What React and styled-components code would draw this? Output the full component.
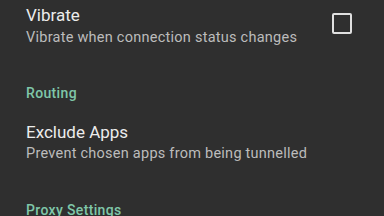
import React from "react";
import styled, { createGlobalStyle } from "styled-components";

const GlobalStyle = createGlobalStyle`
  html, body {
    margin: 0;
    padding: 0;
    background: #2f2f2f;
    overflow: hidden;
  }
`;

const Screen = styled.div`
  width: 384px;
  height: 216px;
  overflow: hidden;
  background: #2f2f2f;
  font-family: Roboto, "Noto Sans", sans-serif;
`;

const List = styled.div`
  display: flex;
  flex-direction: column;
  margin-top: -12px;
`;

const Item = styled.div`
  display: flex;
  align-items: center;
  padding: 16px 32px 16px 26px;
`;

const Texts = styled.div`
  flex: 1;
  display: flex;
  flex-direction: column;
  gap: 1.5px;
`;

const Title = styled.div`
  font-size: 17px;
  line-height: 22px;
  color: #ececec;
`;

const Summary = styled.div`
  font-size: 14.5px;
  line-height: 20px;
  letter-spacing: 0.25px;
  color: #bcbcbc;
`;

const Category = styled.div`
  padding: 19.5px 26px 1.5px;
  font-size: 14px;
  line-height: 20px;
  font-weight: 500;
  letter-spacing: 0.35px;
  color: #7fc7a9;
`;

const Checkbox = styled.div`
  width: 16px;
  height: 17px;
  border: 2px solid #e0e0e0;
  border-radius: 2px;
  margin-top: -4px;
`;

const Preference = ({ title, summary, checkbox }) => (
  <Item>
    <Texts>
      <Title>{title}</Title>
      <Summary>{summary}</Summary>
    </Texts>
    {checkbox && <Checkbox />}
  </Item>
);

export default function App() {
  return (
    <Screen>
      <GlobalStyle />
      <List>
        <Preference
          title="Vibrate"
          summary="Vibrate when connection status changes"
          checkbox
        />
        <Category>Routing</Category>
        <Preference
          title="Exclude Apps"
          summary="Prevent chosen apps from being tunnelled"
        />
        <Category>Proxy Settings</Category>
      </List>
    </Screen>
  );
}
